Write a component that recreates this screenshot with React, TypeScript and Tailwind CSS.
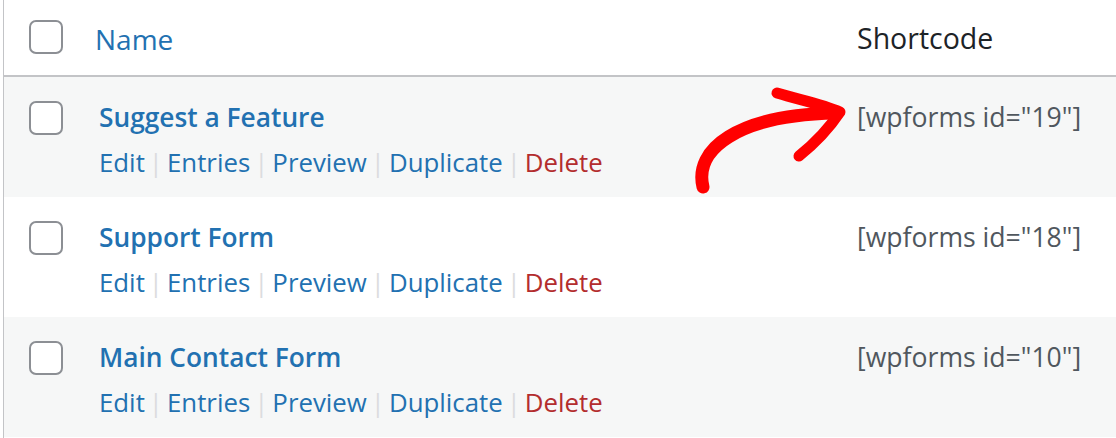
import React from 'react';

type Form = { id: number; title: string };

const forms: Form[] = [
  { id: 19, title: 'Suggest a Feature' },
  { id: 18, title: 'Support Form' },
  { id: 10, title: 'Main Contact Form' },
];

const actions = ['Edit', 'Entries', 'Preview', 'Duplicate', 'Delete'];

function Checkbox() {
  return <span className="block h-[34px] w-[34px] rounded-[7px] border-2 border-[#8c8f94] bg-white" />;
}

function Arrow() {
  return (
    <svg
      className="pointer-events-none absolute left-0 top-0"
      width="1116"
      height="438"
      viewBox="0 0 1116 438"
      fill="none"
    >
      <path
        d="M703 187 C 694 150, 736 115, 836 113"
        stroke="#ff0000"
        strokeWidth="13"
        strokeLinecap="round"
      />
      <path
        d="M777 93 C 800 100, 822 104, 840 112 C 828 130, 814 144, 799 156"
        stroke="#ff0000"
        strokeWidth="11"
        strokeLinecap="round"
        strokeLinejoin="round"
      />
    </svg>
  );
}

export default function App() {
  return (
    <div className="relative h-[438px] w-[1116px] overflow-hidden bg-white font-['Open_Sans',sans-serif]">
      <div className="ml-[3px] h-full border-l border-[#c3c4c7]">
        {/* шапка таблицы */}
        <div className="flex h-[77px] items-center border-b-2 border-[#c3c4c7] pt-[2px]">
          <div className="-mt-[4px] pl-[25px]">
            <Checkbox />
          </div>
          <div className="flex-1 pl-[32px] text-[28px] text-[#2271b1]">Name</div>
          <div className="w-[259px] text-[28.5px] text-[#1d2327]">Shortcode</div>
        </div>

        {forms.map((f, i) => (
          <div
            key={f.id}
            className={`flex h-[120px] ${i % 2 === 0 ? 'bg-[#f6f7f7]' : 'bg-white'}`}
          >
            <div className="pl-[25px] pt-[24px]">
              <Checkbox />
            </div>
            <div className="flex-1 pl-[36px] pt-[20px]">
              <div className="text-[26.3px] font-semibold leading-[40px] text-[#2271b1]">{f.title}</div>
              <div className="mt-[5px] flex items-center text-[25.8px] leading-[40px]">
                {actions.map((a, j) => (
                  <React.Fragment key={a}>
                    {j > 0 && <span className="mx-[4px] text-[#dcdcde]">|</span>}
                    <span className={a === 'Delete' ? 'text-[#b32d2e]' : 'text-[#2271b1]'}>{a}</span>
                  </React.Fragment>
                ))}
              </div>
            </div>
            <div className="w-[259px] pt-[20px] text-[26.6px] leading-[40px] text-[#50575e]">
              [wpforms id="{f.id}"]
            </div>
          </div>
        ))}
      </div>
      <Arrow />
    </div>
  );
}
